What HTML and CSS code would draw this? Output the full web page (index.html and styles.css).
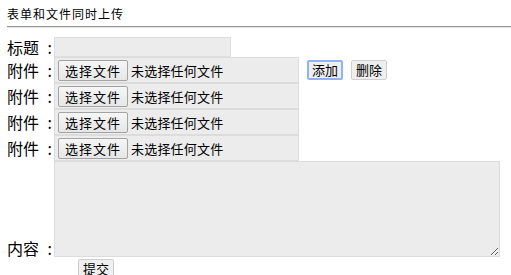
FILE: index.html
```html
<!DOCTYPE html>
<html lang="zh-CN">
<head>
    <meta charset="UTF-8">
    <title>表单和文件同时上传</title>
    <link rel="stylesheet" href="styles.css">
</head>
<body>
    <div class="page">
        <h3 class="title">表单和文件同时上传</h3>
        <hr class="line">

        <form class="upload-form">
            <div class="row">
                <label class="label">标题 :</label>
                <input class="text-input" type="text">
            </div>

            <div class="row">
                <label class="label">附件 :</label>
                <div class="file-box"><button type="button" class="file-btn">选择文件</button><span class="file-name">未选择任何文件</span></div>
                <button type="button" class="small-btn focused">添加</button>
                <button type="button" class="small-btn">删除</button>
            </div>
            <div class="row">
                <label class="label">附件 :</label>
                <div class="file-box"><button type="button" class="file-btn">选择文件</button><span class="file-name">未选择任何文件</span></div>
            </div>
            <div class="row">
                <label class="label">附件 :</label>
                <div class="file-box"><button type="button" class="file-btn">选择文件</button><span class="file-name">未选择任何文件</span></div>
            </div>
            <div class="row">
                <label class="label">附件 :</label>
                <div class="file-box"><button type="button" class="file-btn">选择文件</button><span class="file-name">未选择任何文件</span></div>
            </div>

            <div class="row row-bottom">
                <label class="label">内容 :</label>
                <textarea class="content"></textarea>
            </div>

            <div class="submit-row">
                <button type="submit" class="small-btn">提交</button>
            </div>
        </form>
    </div>
</body>
</html>
```

FILE: styles.css
```css
body {
    margin: 0;
    background: #fff;
    color: #000;
    font-family: "Noto Sans CJK SC", "DejaVu Sans", sans-serif;
}
.page {
    padding: 7px 0 0 7px;
}
.title {
    margin: 0;
    font-size: 12px;
    font-weight: normal;
    line-height: 14px;
    letter-spacing: 1px;
}
.line {
    margin: 5px 0 9px 0;
    border: 0;
    border-top: 1px solid #9a9a9a;
    border-bottom: 1px solid #e4e4e4;
}
.row {
    display: flex;
    align-items: center;
}
.row-bottom {
    align-items: flex-end;
}
.label {
    width: 47px;
    font-size: 16px;
    line-height: 18px;
    white-space: pre;
    word-spacing: 5px;
}
.text-input {
    box-sizing: border-box;
    width: 177px;
    height: 20px;
    margin: 0;
    background: #ececec;
    border: 1px solid #dedede;
}
.file-box {
    box-sizing: border-box;
    width: 245px;
    height: 26px;
    display: flex;
    align-items: center;
    padding-left: 3px;
    background: #ececec;
    border: 1px solid #dcdcdc;
}
.file-btn {
    box-sizing: border-box;
    width: 70px;
    height: 21px;
    padding: 0;
    font-family: inherit;
    font-size: 13px;
    letter-spacing: 1px;
    background: linear-gradient(#f6f6f6, #e6e6e6);
    border: 1px solid #a3a3a3;
    border-radius: 2px;
}
.file-name {
    margin-left: 3px;
    font-size: 13px;
    letter-spacing: 0.2px;
}
.small-btn {
    box-sizing: border-box;
    height: 20px;
    padding: 0 4px;
    margin-left: 8px;
    font-family: inherit;
    font-size: 13px;
    line-height: 16px;
    background: #efefef;
    border: 1px solid #cfcfcf;
    border-radius: 2px;
}
.focused {
    border: 2px solid #8fb3f5;
    padding: 0 3px;
}
.content {
    box-sizing: border-box;
    width: 446px;
    height: 96px;
    margin: 0;
    background: #ececec;
    border: 1px solid #dcdcdc;
}
.submit-row {
    display: flex;
    padding: 2px 0 0 71px;
}
.submit-row .small-btn {
    margin-left: 0;
    height: 19px;
}
```
